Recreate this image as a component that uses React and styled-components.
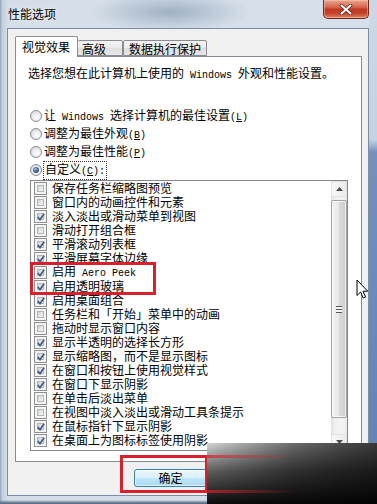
import React from 'react';
import styled, { createGlobalStyle } from 'styled-components';

const GlobalStyle = createGlobalStyle`
  html, body {
    margin: 0;
    padding: 0;
  }
  body {
    width: 377px;
    height: 504px;
    overflow: hidden;
    background: #fff;
    font-family: "Noto Sans CJK SC", sans-serif;
    color: #000;
  }
`;

const WindowS = styled.div`
  position: relative;
  width: 377px;
  height: 504px;
  overflow: hidden;
  display: flex;
  flex-direction: column;
  background:
    linear-gradient(to bottom, #cdd8e4 0, #c4d2e1 140px, #7292bc 152px, #5f82b2 100%) right top / 8px 100% no-repeat,
    linear-gradient(to bottom, rgba(0,0,0,0) 0, rgba(0,0,0,0) 500px, #5d6f86 503px) left top / 100% 100% no-repeat,
    radial-gradient(ellipse 80px 20px at 170px 12px, rgba(118,140,166,0.55), rgba(118,140,166,0)),
    linear-gradient(to right, #8ea2b8 0, #c0cdda 2px, #d4dee8 8px, #d6e0ea 100%);
`;

const TitleBarS = styled.div`
  display: flex;
  align-items: flex-start;
  height: 28px;
  padding-left: 8px;
`;

const TitleS = styled.div`
  margin-top: 7px;
  font-size: 12px;
  line-height: 14px;
  text-shadow: 0 0 6px rgba(255, 255, 255, 0.9);
`;

const CloseS = styled.div`
  margin-left: auto;
  margin-right: 8px;
  width: 46px;
  height: 19px;
  box-sizing: border-box;
  border: 1px solid #6a2b22;
  border-top: none;
  border-radius: 0 0 5px 5px;
  background: linear-gradient(#e9a792 0, #d9654c 40%, #bf3822 52%, #c5452c 75%, #e2866a 100%);
  box-shadow: inset 0 0 0 1px rgba(255, 210, 190, 0.45);
  display: flex;
  align-items: center;
  justify-content: center;
`;

const ClientS = styled.div`
  margin: 0 8px 0 7px;
  height: 468px;
  box-sizing: border-box;
  background: #f0f0f0;
  border: 1px solid #7b8ea3;
  padding: 7px 6px 0 7px;
  display: flex;
  flex-direction: column;
`;

const TabRowS = styled.div`
  display: flex;
  align-items: flex-end;
  height: 21px;
  margin-bottom: -1px;
  position: relative;
  z-index: 1;
`;

const TabS = styled.div`
  width: ${(props) => props.width}px;
  height: ${(props) => (props.active ? '21px' : '16px')};
  margin-bottom: ${(props) => (props.active ? '0' : '1px')};
  box-sizing: border-box;
  padding-left: ${(props) => props.pad || 6}px;
  border: 1px solid #898c95;
  border-bottom: ${(props) => (props.active ? 'none' : '1px solid #898c95')};
  border-left: ${(props) => (props.noleft ? 'none' : '1px solid #898c95')};
  border-radius: 2px 2px 0 0;
  background: ${(props) => (props.active ? '#fff' : 'linear-gradient(#f3f3f3, #ebebeb 50%, #dedede 51%, #e6e6e6)')};
  font-size: 12px;
  line-height: ${(props) => (props.active ? '20px' : '15px')};
  white-space: nowrap;
`;

const PanelS = styled.div`
  height: 406px;
  box-sizing: border-box;
  background: #fff;
  border: 1px solid #898c95;
  padding: 9px 12px 0 12px;
  display: flex;
  flex-direction: column;
`;

const TextS = styled.div`
  font-size: 12px;
  line-height: 14px;
  white-space: nowrap;
`;

const MonoS = styled.span`
  font-family: "Liberation Mono", monospace;
  font-size: 10px;
`;

const RadioGroupS = styled.div`
  margin-top: 24px;
  display: flex;
  flex-direction: column;
`;

const RadioRowS = styled.div`
  display: flex;
  align-items: center;
  height: 18px;
  padding-left: 2px;
  gap: 2px;
  font-size: 12px;
  line-height: 14px;
  white-space: nowrap;
`;

const RadioS = styled.div`
  width: 12px;
  height: 12px;
  box-sizing: border-box;
  border-radius: 50%;
  border: 1px solid #8a8d90;
  background: radial-gradient(circle at 60% 65%, #fdfdfd 0, #e6e7e9 55%, #c9cbce 100%);
  display: flex;
  align-items: center;
  justify-content: center;

  &::after {
    content: '';
    display: ${(props) => (props.checked ? 'block' : 'none')};
    width: 6px;
    height: 6px;
    border-radius: 50%;
    background: radial-gradient(circle at 40% 35%, #9fc3e8 0, #3a6495 50%, #1f3c62 100%);
  }
`;

const FocusS = styled.span`
  outline: 1px dotted #333;
  outline-offset: 0;
  padding: 0 1px;
`;

const ListS = styled.div`
  margin-top: 1px;
  margin-left: 2px;
  width: 318px;
  height: 271px;
  box-sizing: border-box;
  border: 1px solid #828790;
  display: flex;
`;

const ItemsS = styled.div`
  flex: 1;
  display: flex;
  flex-direction: column;
`;

const CheckRowS = styled.div`
  display: flex;
  align-items: center;
  height: 14px;
  flex-shrink: 0;
  padding-left: 3px;
  gap: 5px;
  font-size: 12px;
  line-height: 14px;
  white-space: nowrap;
`;

const CheckBoxS = styled.div`
  width: 13px;
  height: 13px;
  box-sizing: border-box;
  border: 1px solid #8e8f8f;
  background: #f4f4f4;
  padding: 2px;
  flex-shrink: 0;
  position: relative;
`;

const CheckInnerS = styled.div`
  width: 100%;
  height: 100%;
  box-sizing: border-box;
  border: 1px solid #b2b6bb;
  background: linear-gradient(135deg, #cdd1d6 0, #e4e6e8 50%, #f6f6f6 100%);
`;

const CheckMarkS = styled.svg`
  position: absolute;
  left: 1px;
  top: 1px;
`;

const ScrollbarS = styled.div`
  width: 16px;
  display: flex;
  flex-direction: column;
  background: linear-gradient(to right, #e2e2e2 0, #f1f1f1 30%, #f4f4f4 70%, #e9e9e9 100%);
`;

const ArrowS = styled.div`
  height: 16px;
  box-sizing: border-box;
  border: 1px solid #e2e2e2;
  border-radius: 2px;
  background: linear-gradient(to right, #f7f7f7, #ececec);
  display: flex;
  align-items: center;
  justify-content: center;
`;

const ThumbS = styled.div`
  margin-top: 3px;
  height: 218px;
  box-sizing: border-box;
  border: 1px solid #a3a3a3;
  border-radius: 2px;
  background: linear-gradient(to right, #f3f3f3 0, #e9e9e9 45%, #d8d8d8 55%, #cfcfcf 100%);
  box-shadow: inset 0 0 0 1px rgba(255, 255, 255, 0.7);
  display: flex;
  align-items: center;
  justify-content: center;
`;

const GripS = styled.div`
  width: 6px;
  height: 7px;
  background: repeating-linear-gradient(#555 0, #555 1px, #f4f4f4 1px, #f4f4f4 3px);
`;

const TrackS = styled.div`
  flex: 1;
`;

const ButtonRowS = styled.div`
  display: flex;
  padding: 7px 0 0 119px;
`;

const ButtonS = styled.div`
  width: 73px;
  height: 18px;
  box-sizing: border-box;
  border: 1px solid #3c7fb1;
  border-radius: 3px;
  background: linear-gradient(#eaf6fd 0, #d9f0fc 50%, #bee6fd 51%, #a7d9f5 100%);
  box-shadow: inset 0 0 0 1px rgba(255, 255, 255, 0.6);
  font-size: 12px;
  line-height: 16px;
  text-align: center;
`;

const HighlightS = styled.div`
  position: absolute;
  left: ${(props) => props.left}px;
  top: ${(props) => props.top}px;
  width: ${(props) => props.width}px;
  height: ${(props) => props.height}px;
  box-sizing: border-box;
  border: 3px solid #d7202a;
  z-index: 3;
`;

const SmearS = styled.div`
  position: absolute;
  left: 207px;
  top: 443px;
  width: 170px;
  height: 61px;
  z-index: 4;
  background:
    linear-gradient(to right, rgba(215, 32, 42, 0.7), rgba(215, 32, 42, 0) 90px) left 12px / 100% 3px no-repeat,
    linear-gradient(to right, rgba(215, 32, 42, 0.7), rgba(215, 32, 42, 0) 90px) left 47px / 100% 3px no-repeat,
    linear-gradient(to bottom, rgba(0, 0, 0, 0) 0, rgba(0, 0, 0, 0.55) 45%, rgba(0, 0, 0, 0.95) 100%),
    linear-gradient(to right, #d6d6d6 0, #a9a9a9 20%, #6c6c6c 50%, #4a4a4a 80%, #3a3a3a 100%);
`;

const CursorS = styled.svg`
  position: absolute;
  left: 356px;
  top: 279px;
  z-index: 5;
`;

const checks = [
  ['保存任务栏缩略图预览', false],
  ['窗口内的动画控件和元素', false],
  ['淡入淡出或滑动菜单到视图', true],
  ['滑动打开组合框', false],
  ['平滑滚动列表框', true],
  ['平滑屏幕字体边缘', true],
  [<>启用<MonoS> Aero Peek</MonoS></>, true],
  ['启用透明玻璃', true],
  ['启用桌面组合', true],
  ['任务栏和「开始」菜单中的动画', false],
  ['拖动时显示窗口内容', false],
  ['显示半透明的选择长方形', true],
  ['显示缩略图，而不是显示图标', true],
  ['在窗口和按钮上使用视觉样式', true],
  ['在窗口下显示阴影', true],
  ['在单击后淡出菜单', false],
  ['在视图中淡入淡出或滑动工具条提示', false],
  ['在鼠标指针下显示阴影', true],
  ['在桌面上为图标标签使用阴影', true],
];

function CheckBox({ checked }) {
  return (
    <CheckBoxS>
      <CheckInnerS />
      {checked && (
        <CheckMarkS width="10" height="10" viewBox="0 0 10 10">
          <path d="M1.8 5 L4 7.6 L8.2 1.8" fill="none" stroke="#435a86" strokeWidth="1.7" />
        </CheckMarkS>
      )}
    </CheckBoxS>
  );
}

export default function App() {
  return (
    <WindowS>
      <GlobalStyle />
      <TitleBarS>
        <TitleS>性能选项</TitleS>
        <CloseS>
          <svg width="14" height="11" viewBox="0 0 14 11">
            <path d="M2.5 1.5 L11.5 9.5 M11.5 1.5 L2.5 9.5" stroke="#5a2a24" strokeWidth="3.6" strokeLinecap="round" />
            <path d="M2.5 1.5 L11.5 9.5 M11.5 1.5 L2.5 9.5" stroke="#fff" strokeWidth="2" strokeLinecap="round" />
          </svg>
        </CloseS>
      </TitleBarS>

      <ClientS>
        <TabRowS>
          <TabS active width={63} pad={6}>视觉效果</TabS>
          <TabS width={45} pad={4} noleft>高级</TabS>
          <TabS width={84} pad={5}>数据执行保护</TabS>
        </TabRowS>

        <PanelS>
          <TextS>选择您想在此计算机上使用的<MonoS> Windows </MonoS>外观和性能设置。</TextS>

          <RadioGroupS>
            <RadioRowS>
              <RadioS />
              <span>让<MonoS> Windows </MonoS>选择计算机的最佳设置<MonoS>(<u>L</u>)</MonoS></span>
            </RadioRowS>
            <RadioRowS>
              <RadioS />
              <span>调整为最佳外观<MonoS>(<u>B</u>)</MonoS></span>
            </RadioRowS>
            <RadioRowS>
              <RadioS />
              <span>调整为最佳性能<MonoS>(<u>P</u>)</MonoS></span>
            </RadioRowS>
            <RadioRowS>
              <RadioS checked />
              <FocusS>自定义<MonoS>(<u>C</u>):</MonoS></FocusS>
            </RadioRowS>
          </RadioGroupS>

          <ListS>
            <ItemsS>
              {checks.map(([label, on], i) => (
                <CheckRowS key={i}>
                  <CheckBox checked={on} />
                  <span>{label}</span>
                </CheckRowS>
              ))}
            </ItemsS>
            <ScrollbarS>
              <ArrowS>
                <svg width="7" height="4" viewBox="0 0 7 4"><path d="M0 4 L3.5 0 L7 4 Z" fill="#4d4d4d" /></svg>
              </ArrowS>
              <ThumbS><GripS /></ThumbS>
              <TrackS />
              <ArrowS>
                <svg width="7" height="4" viewBox="0 0 7 4"><path d="M0 0 L3.5 4 L7 0 Z" fill="#4d4d4d" /></svg>
              </ArrowS>
            </ScrollbarS>
          </ListS>
        </PanelS>

        <ButtonRowS>
          <ButtonS>确定</ButtonS>
        </ButtonRowS>
      </ClientS>

      <HighlightS left={30} top={262} width={126} height={33} />
      <HighlightS left={120} top={455} width={88} height={38} />
      <SmearS />
      <CursorS width="13" height="21" viewBox="0 0 13 21">
        <path d="M1 1 L1 16.5 L4.6 13 L7.2 19 L9.6 18 L7 12.2 L11.8 12.2 Z" fill="#fff" stroke="#000" strokeWidth="1" strokeLinejoin="miter" />
      </CursorS>
    </WindowS>
  );
}
